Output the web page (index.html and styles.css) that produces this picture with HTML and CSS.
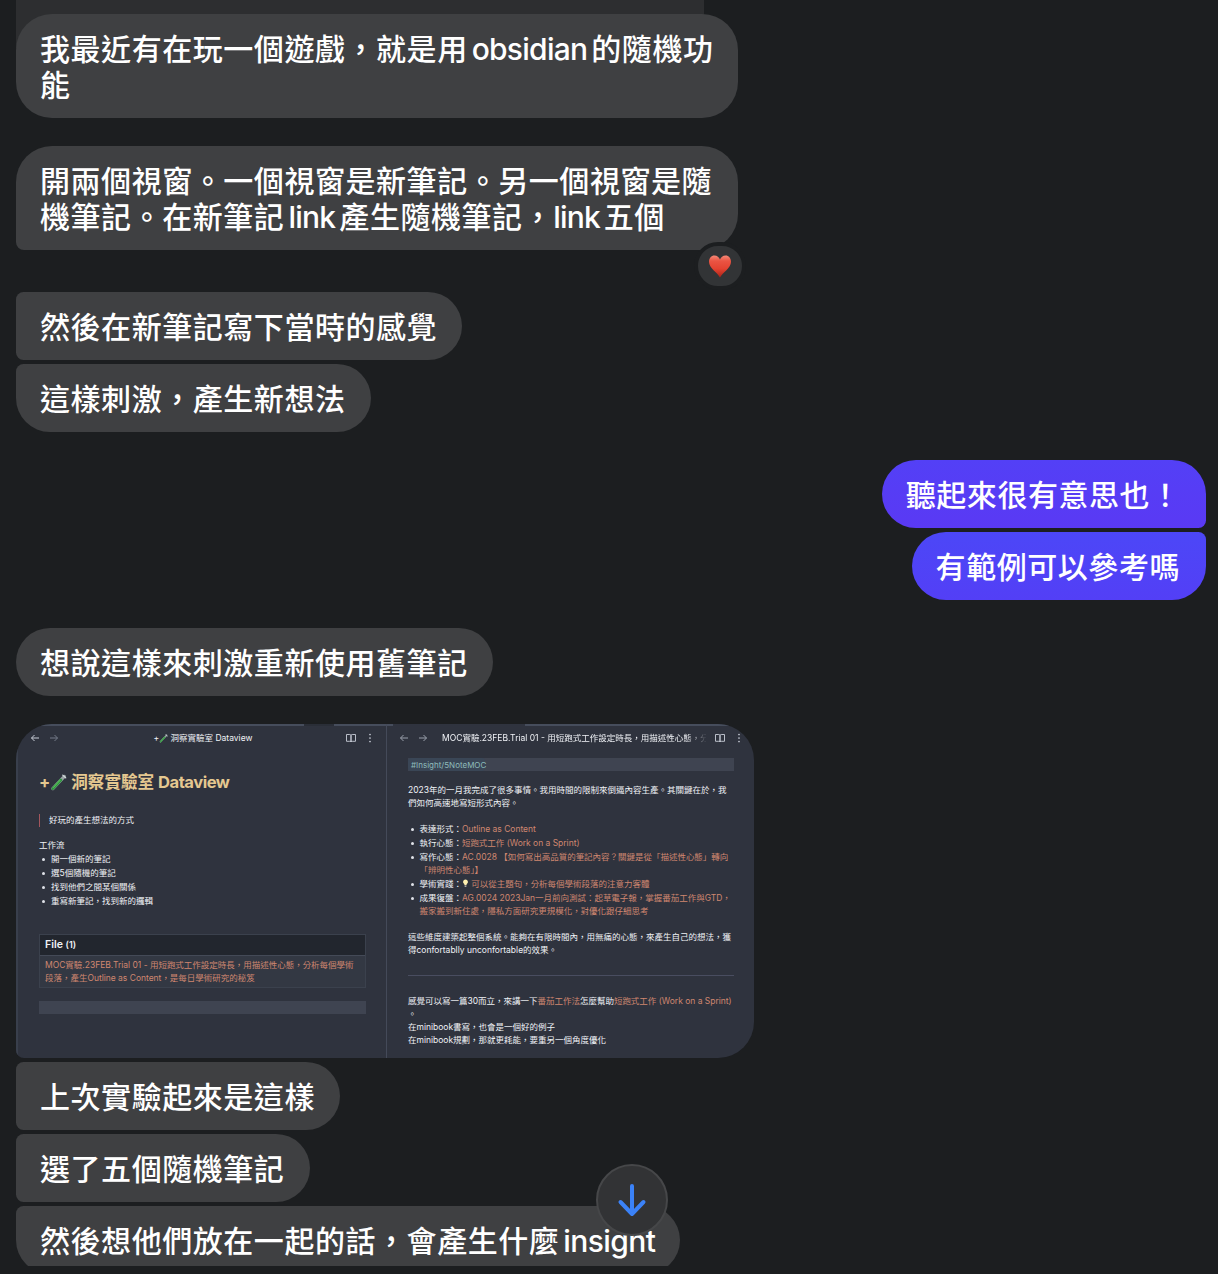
FILE: index.html
```html
<!DOCTYPE html>
<html lang="zh-Hant">
<head>
<meta charset="utf-8">
<title>Chat</title>
<link rel="stylesheet" href="styles.css">
</head>
<body>
<svg class="defs" width="0" height="0">
  <defs>
    <linearGradient id="heart-fill" x1="0" y1="0" x2="0" y2="1"><stop offset="0" stop-color="#f58a78"/><stop offset=".25" stop-color="#ea5443"/><stop offset=".6" stop-color="#e34331"/><stop offset="1" stop-color="#a92318"/></linearGradient>
    <symbol id="tube" viewBox="0 0 18 18"><path d="M15.200 2.500 3 15.500" stroke="#9aa3a5" stroke-width="3.400" stroke-linecap="round"/><path d="M11.500 6.400 3 15.500" stroke="#2f9440" stroke-width="2.900" stroke-linecap="round"/><path d="M10.500 6.800 3.500 14.300" stroke="#69cf62" stroke-width="1" stroke-linecap="round"/><path d="m13.500 1.200 3.200 2.900" stroke="#d5dcdd" stroke-width="1.300" stroke-linecap="round"/></symbol>
    <symbol id="left" viewBox="0 0 10 10"><path d="M9 5H1.500M4.500 2l-3 3 3 3" fill="none" stroke="currentColor" stroke-width="1"/></symbol>
    <symbol id="right" viewBox="0 0 10 10"><path d="M1 5h7.500M5.500 2l3 3-3 3" fill="none" stroke="currentColor" stroke-width="1"/></symbol>
    <symbol id="book" viewBox="0 0 10 10"><path d="M.5 1.500h3.300Q5 1.500 5 2.700V9Q5 8.300 3.800 8.300H.5zM9.500 1.500H6.200Q5 1.500 5 2.700V9Q5 8.300 6.200 8.300h3.300z" fill="none" stroke="currentColor" stroke-width=".9"/></symbol>
    <symbol id="dots" viewBox="0 0 4 10"><g fill="currentColor"><circle cx="2" cy="1.500" r=".85"/><circle cx="2" cy="5" r=".85"/><circle cx="2" cy="8.500" r=".85"/></g></symbol>
  </defs>
</svg>
<main class="chat">
  <div class="previous"></div>
  <div class="bubble wide">我最近有在玩一個遊戲，就是用<span class="en">obsidian</span>的隨機功<br>能</div>
  <div class="bubble wide first reacted">開兩個視窗。一個視窗是新筆記。另一個視窗是隨<br>機筆記。在新筆記<span class="en">link</span>產生隨機筆記，<span class="en after-comma">link</span>五個
    <span class="reaction"><svg width="24" height="24" viewBox="0 0 24 24"><path d="M12 23.500C9.500 18.500 1 14 1 7.700 1 4.100 3.300 1.500 6.400 1.500c2.800 0 4.800 1.700 5.600 4 .8-2.300 2.800-4 5.600-4 3.100 0 5.400 2.600 5.400 6.200C23 14 14.500 18.500 12 23.500Z" fill="url(#heart-fill)"/></svg></span>
  </div>
  <div class="bubble middle after-reaction">然後在新筆記寫下當時的感覺</div>
  <div class="bubble last">這樣刺激，產生新想法</div>
  <div class="bubble mine mine-first">聽起來很有意思也！</div>
  <div class="bubble mine mine-last">有範例可以參考嗎</div>
  <div class="bubble new-group">想說這樣來刺激重新使用舊筆記</div>

  <div class="shot">
    <section class="pane left-pane">
      <header class="bar">
        <svg class="ico"><use href="#left"/></svg><svg class="ico dim"><use href="#right"/></svg>
        <span class="bar-title">+<svg class="tube-s"><use href="#tube"/></svg> 洞察實驗室 Dataview</span>
        <svg class="ico"><use href="#book"/></svg><svg class="dots"><use href="#dots"/></svg>
      </header>
      <div class="note">
        <h1>+<svg class="tube-l"><use href="#tube"/></svg> 洞察實驗室 <span class="dv">Dataview</span></h1>
        <blockquote>好玩的產生想法的方式</blockquote>
        <p class="flow">工作流</p>
        <ul class="steps"><li>開一個新的筆記</li><li>選5個隨機的筆記</li><li>找到他們之間某個關係</li><li>重寫新筆記，找到新的邏輯</li></ul>
        <div class="table">
          <div class="th">File <small>(1)</small></div>
          <div class="td">MOC實驗.23FEB.Trial 01 - 用短跑式工作設定時長，用描述性心態，分析每個學術<br>段落，產生Outline as Content，是每日學術研究的秘笈</div>
        </div>
        <div class="strip"></div>
      </div>
    </section>
    <section class="pane right-pane">
      <header class="bar">
        <svg class="ico dim2"><use href="#left"/></svg><svg class="ico dim2"><use href="#right"/></svg>
        <span class="bar-title long">MOC實驗.23FEB.Trial 01 - 用短跑式工作設定時長，用描述性心態，分</span>
        <svg class="ico"><use href="#book"/></svg><svg class="dots"><use href="#dots"/></svg>
      </header>
      <div class="note">
        <div class="strip tags"><span>#Insight/5NoteMOC</span></div>
        <p class="intro">2023年的一月我完成了很多事情。我用時間的限制來倒逼內容生產。其關鍵在於，我<br>們如何高速地寫短形式內容。</p>
        <ul class="facets">
          <li>表達形式：<a>Outline as Content</a></li>
          <li>執行心態：<a>短跑式工作 (Work on a Sprint)</a></li>
          <li>寫作心態：<a>AC.0028 【如何寫出高品質的筆記內容？關鍵是從「描述性心態」轉向<br>「辨明性心態」】</a></li>
          <li>學術實踐：<svg class="bulb" viewBox="0 0 8 10"><path d="M4 .5a2.700 2.700 0 0 0-1.500 5L3 7h2l.5-1.500A2.700 2.700 0 0 0 4 .5Z" fill="#fff0b0"/><path d="M3 7.300h2v1.700H3z" fill="#a8a8a8"/></svg> <a>可以從主題句，分析每個學術段落的注意力客體</a></li>
          <li>成果復盤：<a>AG.0024 2023Jan一月前向測試：起草電子報，掌握番茄工作與GTD，<br>搬家搬到新住處，隱私方面研究更規模化，對優化跟仔細思考</a></li>
        </ul>
        <p class="system">這些維度建築起整個系統。能夠在有限時間內，用無痛的心態，來產生自己的想法，獲<br>得confortablly unconfortable的效果。</p>
        <hr>
        <p class="closing">感覺可以寫一篇30而立，來講一下<a>番茄工作法</a>怎麼幫助<a>短跑式工作 (Work on a Sprint)</a><br>。<br>在minibook書寫，也會是一個好的例子<br>在minibook規劃，那就更耗能，要重另一個角度優化</p>
      </div>
    </section>
  </div>

  <div class="bubble middle">上次實驗起來是這樣</div>
  <div class="bubble middle">選了五個隨機筆記</div>
  <div class="bubble last">然後想他們放在一起的話，會產生什麼<span class="en at-end">insight</span></div>
  <button class="jump" aria-label="捲到最新訊息"><svg width="32" height="34" viewBox="0 0 32 34"><path d="M16 3v27.500M4.500 19 16 31 27.500 19" fill="none" stroke="#3b82f7" stroke-width="4" stroke-linecap="round" stroke-linejoin="round"/></svg></button>
</main>
</body>
</html>
```
FILE: styles.css
```css
* { box-sizing: border-box; }
body { margin: 0; height: 1274px; overflow: hidden; background: #1c1e20; font-family: "Inter", "Noto Sans CJK TC", sans-serif; }
.defs { position: absolute; }
.chat { position: relative; height: 1266px; overflow: hidden; padding: 0 12px 0 16px; display: flex; flex-direction: column; align-items: flex-start; }
.previous { flex: none; width: 688px; height: 48px; margin-bottom: -34px; background: #2d2e30; }
.bubble { position: relative; flex: none; padding: 15px 25.3px 17px 24px; border-radius: 36px; background: #3f4042; color: #fff; font: 500 30px/36px "Noto Sans CJK TC", sans-serif; letter-spacing: .55px; white-space: nowrap; }
.en { font-family: "Inter", sans-serif; font-size: 30px; line-height: 30px; font-weight: 500; letter-spacing: -.75px; margin: 0 4px; }
.after-comma { margin-left: 0; margin-right: 3.500px; }
.at-end { margin-right: -.5px; letter-spacing: -.6px; }
.wide { width: 722px; }
.first { margin-top: 28px; border-bottom-left-radius: 8px; }
.middle { margin-top: 4px; border-top-left-radius: 8px; border-bottom-left-radius: 8px; }
.last { margin-top: 4px; border-top-left-radius: 8px; }
.after-reaction { margin-top: 42px; }
.new-group { margin-top: 28px; }
.mine { align-self: flex-end; background: linear-gradient(#5340f6, #5a39f4); }
.mine-first { margin-top: 28px; border-bottom-right-radius: 8px; }
.mine-last { margin-top: 4px; padding-right: 26px; border-top-right-radius: 8px; background: linear-gradient(#4c47f7, #533ff6); }
.reaction { position: absolute; right: -8px; bottom: -40px; width: 52px; height: 48px; display: grid; place-items: center; border: 4px solid #1c1e20; border-radius: 26px; background: #323436; }
.shot { flex: none; display: flex; width: 738px; height: 334px; margin-top: 28px; overflow: hidden; border-radius: 36px 36px 36px 8px; background: #2f333e; color: #f0f2f6; font-size: 8.5px; line-height: 13px; white-space: nowrap; }
.pane { flex: none; padding-top: 2px; background-repeat: no-repeat; }
.left-pane { width: 371px; border-left: 2px solid #393f4c; border-right: 1px solid #444a59; background-image: linear-gradient(to right, #464d5c 286px, #2a2e37 286px 316px, #464d5c 316px); background-size: 100% 2px; }
.right-pane { width: 367px; background-image: linear-gradient(to right, #464d5c 6px, #2f333e 6px 138px, #464d5c 138px); background-size: 100% 2px; }
.bar { display: flex; align-items: center; height: 24px; padding: 0 14px 0 12px; }
.right-pane .bar { padding: 0 12px 0 12px; }
.ico { flex: none; width: 10px; height: 10px; color: #c9ced8; }
.ico + .ico { margin-left: 9px; }
.dim { color: #747b88; }
.dim2 { color: #9aa0ab; }
.dots { flex: none; width: 4px; height: 10px; margin-left: 12px; color: #c9ced8; }
.bar-title { flex: 1; display: flex; align-items: center; justify-content: center; padding-left: 1px; white-space: pre; }
.bar-title.long { flex: none; display: block; width: 264px; margin: 0 9px 0 14px; padding: 0; overflow: hidden; mask-image: linear-gradient(to right, #000 244px, transparent 266px); }
.tube-s { width: 9px; height: 9px; }
.note { padding: 0 20px 0 21px; }
h1 { display: flex; align-items: center; height: 24px; margin: 20px 0 0; font-size: 16.6px; line-height: 24px; font-weight: 700; color: #e5c890; white-space: pre; }
.tube-l { width: 17px; height: 17px; }
.dv { letter-spacing: -.5px; }
blockquote { height: 13px; margin: 20px 0 0; padding-left: 9px; border-left: 1px solid #a3565d; }
p { margin: 0; }
.flow { margin-top: 12px; }
ul { list-style: none; margin: 0; padding: 0; }
li { position: relative; padding-left: 12px; }
li::before { content: ""; position: absolute; left: 3px; top: 5px; width: 3px; height: 3px; border-radius: 50%; background: #dfe2e8; }
.steps { margin-top: 1px; }
.steps li, .facets li { margin-bottom: 1px; }
.table { margin-top: 26px; border: 1px solid #3b414d; }
.th { height: 21px; padding-left: 5px; background: #22262e; border-bottom: 1px solid #444a57; font-size: 10.5px; line-height: 20px; font-weight: 600; }
.th small { font-size: 9px; }
.td { height: 31px; padding: 3px 0 0 5px; background: #333843; color: #d08770; letter-spacing: -.015px; }
a { color: #d08770; }
.strip { height: 13px; margin-top: 13px; background: #3f4451; }
.tags { margin-top: 8px; font-size: 8px; line-height: 14px; color: #8fbcbb; }
.tags span { display: block; width: 77px; height: 13px; padding-left: 3px; border-radius: 3px; background: #3a4656; }
.intro { margin-top: 13px; }
.facets { margin-top: 13px; }
.facets li { padding-left: 11.5px; letter-spacing: -.02px; }
.bulb { width: 7px; height: 9px; vertical-align: -1px; }
.system { margin-top: 13px; }
hr { height: 1px; margin: 18px 0 19px; border: 0; background: #494d60; }
.closing { letter-spacing: -.01px; }
.jump { position: absolute; left: 596px; top: 1164px; width: 72px; height: 72px; display: grid; place-items: center; padding: 0; border: 2px solid #464749; border-radius: 50%; background: #323335; }
```
